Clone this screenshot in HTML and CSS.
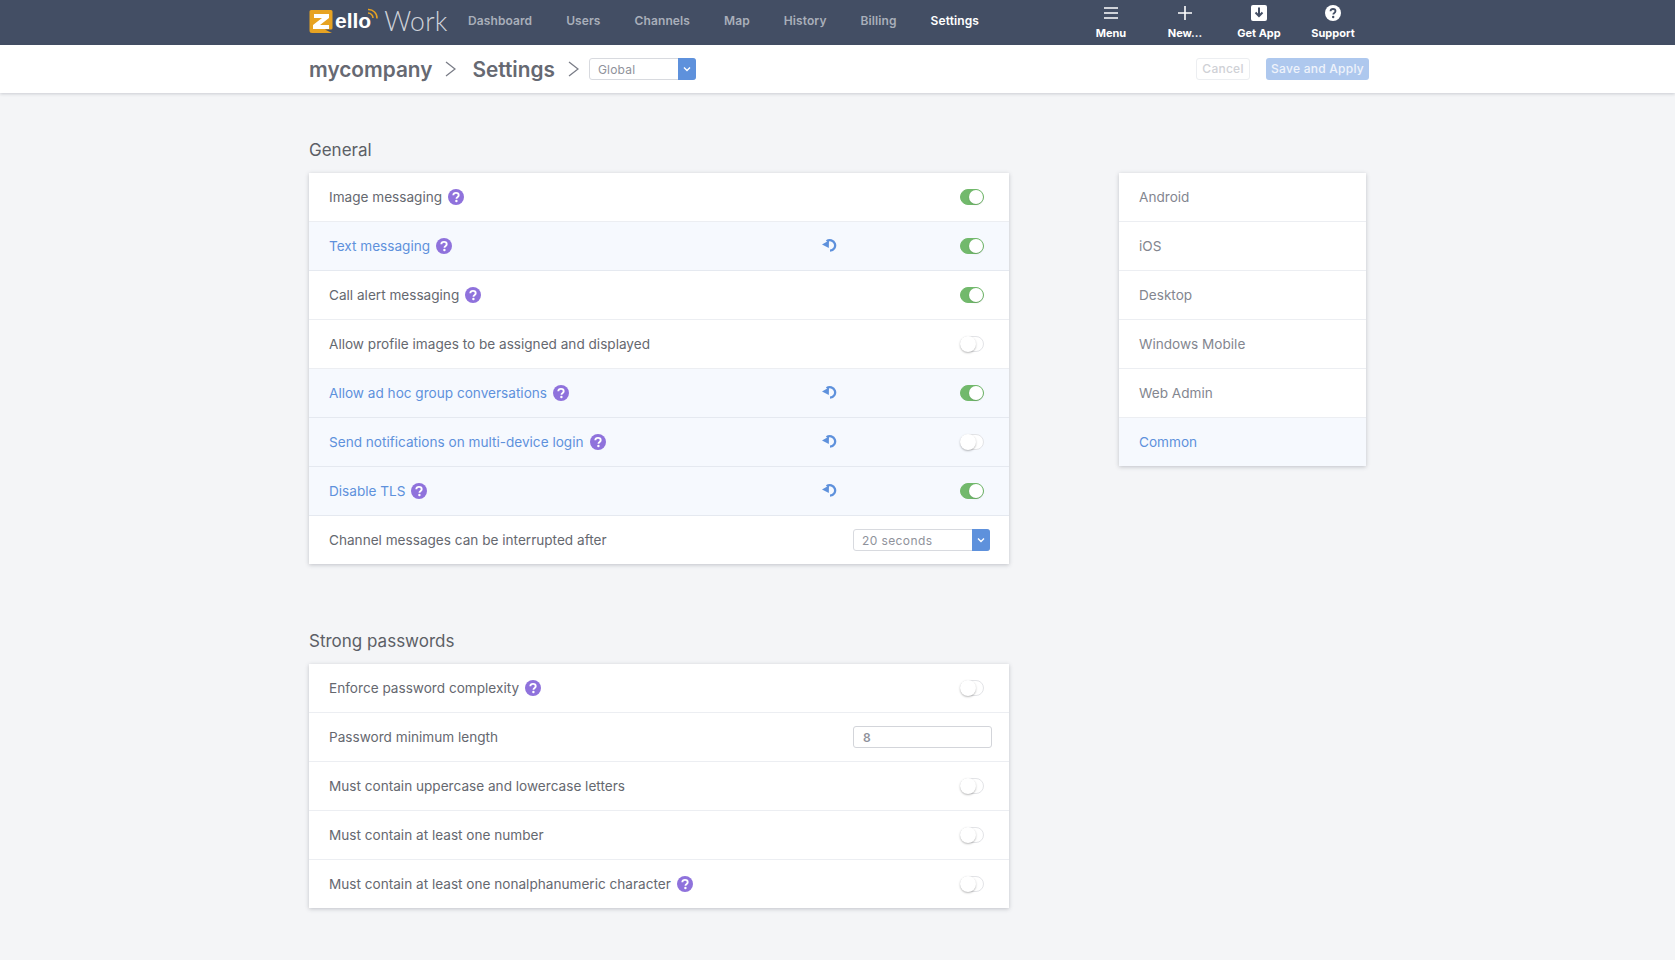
FILE: index.html
```html
<!DOCTYPE html>
<html lang="en">
<head>
<meta charset="utf-8">
<title>Settings</title>
<link rel="stylesheet" href="styles.css">
</head>
<body>
<svg class="defs" width="0" height="0" aria-hidden="true">
  <symbol id="help" viewBox="0 0 16 16">
    <circle cx="8" cy="8" r="8" fill="#8f72dc"/>
    <path d="M5.300 6.200C5.400 4.700 6.600 3.900 8 3.900s2.700.9 2.700 2.300c0 1.100-.7 1.600-1.300 2-.6.400-.9.700-.9 1.500" fill="none" stroke="#fff" stroke-width="1.900"/>
    <circle cx="8.400" cy="12" r="1.200" fill="#fff"/>
  </symbol>
  <symbol id="revert" viewBox="0 0 15 14">
    <path d="M4.600 3.200A5.300 5.300 0 1 1 8 12.700" fill="none" stroke="#5e91dc" stroke-width="2.300"/>
    <path d="M0 6.400 7 2.400 6.800 10Z" fill="#5e91dc"/>
  </symbol>
  <symbol id="chev" viewBox="0 0 8 6">
    <path d="M1 1.400 4 4.400 7 1.400" fill="none" stroke="#fff" stroke-width="1.400"/>
  </symbol>
</svg>

<header class="topbar">
  <div class="topbar-inner">
    <div class="logo">
      <svg class="logo-z" width="24" height="26" viewBox="0 0 24 26">
        <path d="M2 2H22a1.500 1.500 0 0 1 1.500 1.500V20a1.500 1.500 0 0 1-1.500 1.500H16L23 25H3a2.500 2.500 0 0 1-2.500-2.500V3.500A1.500 1.500 0 0 1 2 2Z" fill="#e7a322"/>
        <path d="M5 6H20V10L11 17H20V21H4V17L13 10H5Z" fill="#fff"/>
      </svg>
      <span class="logo-ello">ello</span>
      <svg class="logo-wave" width="12" height="12" viewBox="0 0 12 12">
        <path d="M1 5a5 5 0 0 1 5 5M1 1.500a8.500 8.500 0 0 1 9 9" fill="none" stroke="#e7a322" stroke-width="1.500"/>
      </svg>
      <span class="logo-work">Work</span>
    </div>
    <nav class="nav">
      <a>Dashboard</a><a>Users</a><a>Channels</a><a>Map</a><a>History</a><a>Billing</a><a class="active">Settings</a>
    </nav>
    <div class="actions">
      <a class="action">
        <svg width="18" height="16" viewBox="0 0 18 16"><path d="M2 3H16M2 8H16M2 13H16" stroke="#fff" stroke-width="1.400"/></svg>
        <span>Menu</span>
      </a>
      <a class="action">
        <svg width="18" height="16" viewBox="0 0 18 16"><path d="M9 1V15M2 8H16" stroke="#fff" stroke-width="1.600"/></svg>
        <span>New...</span>
      </a>
      <a class="action">
        <svg width="18" height="16" viewBox="0 0 16 16"><rect width="16" height="16" rx="2" fill="#fff"/><path d="M8 2.500V11M4.500 7.500 8 11l3.500-3.500" fill="none" stroke="#434e64" stroke-width="2"/></svg>
        <span>Get App</span>
      </a>
      <a class="action">
        <svg width="18" height="16" viewBox="0 0 16 16"><circle cx="8" cy="8" r="8" fill="#fff"/><path d="M5.500 6.200C5.600 4.800 6.700 4 8 4s2.500.8 2.500 2.100c0 1-.6 1.500-1.200 1.900-.6.400-1 .7-1 1.500" fill="none" stroke="#434e64" stroke-width="1.800"/><circle cx="8.200" cy="12" r="1.200" fill="#434e64"/></svg>
        <span>Support</span>
      </a>
    </div>
  </div>
</header>

<div class="subbar">
  <div class="subbar-inner">
    <span class="crumb">mycompany</span>
    <svg class="crumb-sep" width="11" height="16" viewBox="0 0 11 16"><path d="M1 1 10 8 1 15" fill="none" stroke="#7a7d87" stroke-width="1.300"/></svg>
    <span class="crumb">Settings</span>
    <svg class="crumb-sep second" width="11" height="16" viewBox="0 0 11 16"><path d="M1 1 10 8 1 15" fill="none" stroke="#7a7d87" stroke-width="1.300"/></svg>
    <div class="select select-global"><span>Global</span><i class="select-btn"><svg width="8" height="6"><use href="#chev"/></svg></i></div>
    <div class="subbar-buttons">
      <button class="btn btn-cancel">Cancel</button>
      <button class="btn btn-save">Save and Apply</button>
    </div>
  </div>
</div>

<main class="main">
  <div class="content">
    <section class="section">
      <h2>General</h2>
      <div class="card">
        <div class="row"><span class="label">Image messaging</span><svg class="help" width="16" height="16"><use href="#help"/></svg><span class="toggle on"></span></div>
        <div class="row changed"><span class="label">Text messaging</span><svg class="help" width="16" height="16"><use href="#help"/></svg><svg class="revert" width="15" height="14"><use href="#revert"/></svg><span class="toggle on"></span></div>
        <div class="row"><span class="label">Call alert messaging</span><svg class="help" width="16" height="16"><use href="#help"/></svg><span class="toggle on"></span></div>
        <div class="row"><span class="label">Allow profile images to be assigned and displayed</span><span class="toggle"></span></div>
        <div class="row changed"><span class="label">Allow ad hoc group conversations</span><svg class="help" width="16" height="16"><use href="#help"/></svg><svg class="revert" width="15" height="14"><use href="#revert"/></svg><span class="toggle on"></span></div>
        <div class="row changed"><span class="label">Send notifications on multi-device login</span><svg class="help" width="16" height="16"><use href="#help"/></svg><svg class="revert" width="15" height="14"><use href="#revert"/></svg><span class="toggle"></span></div>
        <div class="row changed"><span class="label">Disable TLS</span><svg class="help" width="16" height="16"><use href="#help"/></svg><svg class="revert" width="15" height="14"><use href="#revert"/></svg><span class="toggle on"></span></div>
        <div class="row"><span class="label">Channel messages can be interrupted after</span><div class="select select-row"><span>20 seconds</span><i class="select-btn"><svg width="8" height="6"><use href="#chev"/></svg></i></div></div>
      </div>
    </section>
    <section class="section">
      <h2>Strong passwords</h2>
      <div class="card">
        <div class="row"><span class="label">Enforce password complexity</span><svg class="help" width="16" height="16"><use href="#help"/></svg><span class="toggle"></span></div>
        <div class="row"><span class="label">Password minimum length</span><div class="text-input">8</div></div>
        <div class="row"><span class="label">Must contain uppercase and lowercase letters</span><span class="toggle"></span></div>
        <div class="row"><span class="label">Must contain at least one number</span><span class="toggle"></span></div>
        <div class="row"><span class="label">Must contain at least one nonalphanumeric character</span><svg class="help" width="16" height="16"><use href="#help"/></svg><span class="toggle"></span></div>
      </div>
    </section>
  </div>
  <aside class="side card">
    <div class="row"><span class="side-label">Android</span></div>
    <div class="row"><span class="side-label">iOS</span></div>
    <div class="row"><span class="side-label">Desktop</span></div>
    <div class="row"><span class="side-label">Windows Mobile</span></div>
    <div class="row"><span class="side-label">Web Admin</span></div>
    <div class="row changed"><span class="side-label">Common</span></div>
  </aside>
</main>
</body>
</html>
```
FILE: styles.css
```css
* { box-sizing: border-box; }
html, body { margin: 0; height: 100%; }
body {
  background: #f4f5f7;
  color: #65686f;
  font-family: Inter, "Liberation Sans", sans-serif;
  font-size: 13.600px;
  overflow: hidden;
}
.defs { position: absolute; }

/* Top bar */
.topbar { background: #434e64; height: 45px; }
.topbar-inner { display: flex; align-items: flex-start; height: 45px; padding-left: 309px; }
.logo { display: flex; align-items: flex-start; width: 159px; }
.logo-z { margin-top: 8px; flex: none; }
.logo-ello {
  color: #fff; font: 700 21px/21px "Liberation Sans", sans-serif;
  margin: 10px 0 0 2px;
}
.logo-wave { margin: 8px 0 0 -4px; flex: none; }
.logo-work {
  color: #cfd3da; font: 300 26.500px/26px Lato, sans-serif; letter-spacing: .3px;
  margin: 8px 0 0 5px;
}
.nav { display: flex; gap: 34px; padding-top: 13px; }
.nav a { color: #a9afba; font-size: 12px; font-weight: 600; line-height: 15px; letter-spacing: .1px; }
.nav a.active { color: #fff; }
.actions { display: flex; margin-left: 95px; }
.action {
  width: 74px; display: flex; flex-direction: column; align-items: center;
  color: #fff; font-size: 11px; font-weight: 700; padding-top: 5px;
}
.action span { line-height: 14px; margin-top: 5px; }

/* Sub bar */
.subbar { background: #fff; height: 48px; box-shadow: 0 1px 3px rgba(60, 66, 80, .22); position: relative; }
.subbar-inner { display: flex; align-items: center; height: 48px; padding: 0 300px 0 309px; }
.crumb { font-size: 20.800px; font-weight: 600; color: #666972; }
.crumb-sep { margin: 0 16px 0 13px; }
.crumb-sep.second { margin: 0 10px 0 13px; }
.select {
  display: flex; align-items: center; height: 22px; background: #fff;
  border: 1px solid #d8dadf; border-radius: 3px; position: relative;
  color: #8f929b; font-size: 12px; padding-left: 8px;
}
.select-global { width: 107px; letter-spacing: .2px; }
.select-row { width: 137px; margin-left: auto; margin-right: -1px; letter-spacing: .4px; }
.select-btn {
  position: absolute; top: -1px; right: -1px; bottom: -1px; width: 18px;
  background: #5e91dc; border-radius: 0 3px 3px 0;
  display: flex; align-items: center; justify-content: center;
}
.subbar-buttons { display: flex; gap: 16px; margin-left: auto; padding-right: 6px; }
.btn {
  height: 22px; border-radius: 3px; font: 500 12px Inter, sans-serif; letter-spacing: .25px;
  padding: 0 0 2px;
}
.btn-cancel { width: 54px; background: #fff; border: 1px solid #eceef1; color: #cfd1d6; }
.btn-save { width: 103px; background: #aec8ee; border: 0; color: #eef3fb; }

/* Main */
.main { display: flex; align-items: flex-start; padding: 0 0 0 309px; }
.content { width: 700px; }
.section { padding-top: 46px; }
.section + .section { padding-top: 66px; }
.section h2 { margin: 0 0 12px; font-size: 17px; font-weight: 400; line-height: 22px; color: #5c5f66; }
.card { background: #fff; box-shadow: 0 1px 4px rgba(60, 66, 80, .28); }
.row {
  display: flex; align-items: center; height: 49px; padding: 0 20px;
  border-bottom: 1px solid #eceef2;
}
.row:last-child { border-bottom: 0; height: 48px; }
.row.changed { background: #f6f9fe; color: #5e91dc; border-bottom-color: #e5e9f0; }
.label { line-height: 20px; }
.help { margin-left: 6px; flex: none; }
.revert { margin-left: auto; margin-top: -2px; flex: none; }
.toggle {
  margin-left: auto; margin-right: 5px; width: 24px; height: 16px; border-radius: 8px;
  border: 1px solid #e3e4e7; background: #fff; position: relative; flex: none;
}
.revert + .toggle { margin-left: 123px; }
.toggle::after {
  content: ""; position: absolute; top: -1px; left: -1px; width: 16px; height: 16px;
  border-radius: 50%; background: #fff; box-shadow: 0 1px 2px rgba(0, 0, 0, .28);
}
.toggle.on { background: #72b96c; border-color: #72b96c; }
.toggle.on::after { top: 0; left: 8px; width: 14px; height: 14px; box-shadow: 0 1px 2px rgba(0, 0, 0, .12); }
.text-input {
  margin-left: auto; margin-right: -3px; width: 139px; height: 22px;
  border: 1px solid #d3d5da; border-radius: 3px; padding-left: 9px;
  color: #8f929b; font-size: 12px; font-weight: 600; line-height: 22px;
}

/* Side */
.side { width: 247px; margin: 80px 0 0 110px; }
.side-label { color: #83868f; line-height: 20px; }
.side .changed .side-label { color: #5e91dc; }
```
